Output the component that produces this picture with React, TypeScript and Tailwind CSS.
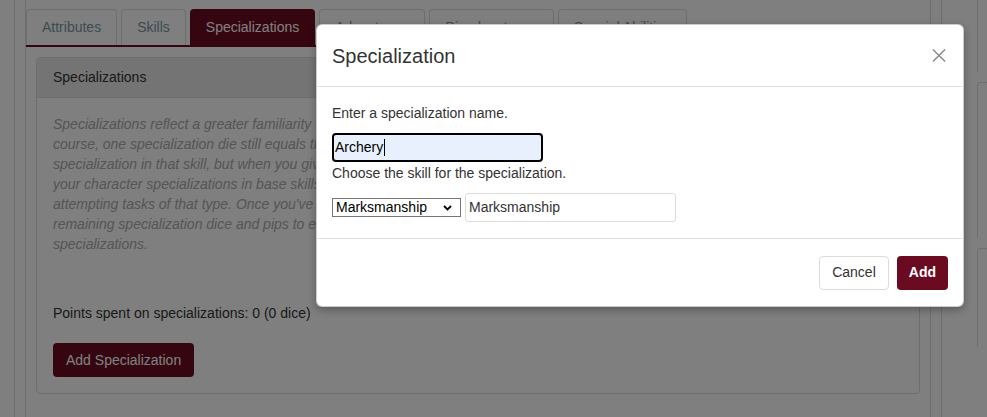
import React from "react";

const TABS = ["Attributes", "Skills", "Specializations", "Advantages", "Disadvantages", "Special Abilities"];

// description text, broken at the same places as the original page
const DESCRIPTION = [
  "Specializations reflect a greater familiarity with a particular item or action covered by the base skill. Specializations cost less than base skills to purchase. Of",
  "course, one specialization die still equals three specialization pips. You can improve the base skill without affecting the specialization, or have a",
  "specialization in that skill, but when you give your character a specialization, it only applies to rolls related to that specific area of expertise. Giving",
  "your character specializations in base skills he already has adds the specialization dice to the base skill's value when the character is",
  "attempting tasks of that type. Once you've spent all of the dice you want on base skills, you may use any",
  "remaining specialization dice and pips to enhance your character's abilities with narrow, focused",
  "specializations.",
];

export default function App() {
  return (
    <div className="relative h-[417px] w-[987px] overflow-hidden bg-white font-['Liberation_Sans',Arial,sans-serif] text-[14px] text-[#333]">
      {/* Page underneath the dialog */}
      <div className="flex h-full">
        <div className="ml-[14px] h-full w-[928px] shrink-0 border-x border-[#dddddd] px-[10px]">
          <div className="flex h-full flex-col border-x border-[#dddddd] pt-[9px]">
            {/* Tab row */}
            <div className="flex gap-[4px] border-b-2 border-[#6b0b21]">
              {TABS.map((tab) => (
                <div
                  key={tab}
                  className={
                    tab === "Specializations"
                      ? "flex h-[36px] items-center rounded-t-[4px] border border-b-0 border-[#6b0b21] bg-[#6b0b21] px-[15px] text-white"
                      : "flex h-[36px] items-center rounded-t-[4px] border border-b-0 border-[#dddddd] px-[15px] text-[#78989f]"
                  }
                >
                  {tab}
                </div>
              ))}
            </div>

            {/* Tab content */}
            <div className="px-[10px] pt-[10px]">
              <div className="flex flex-col rounded-[4px] border border-[#dddddd]">
                <div className="flex h-[40px] items-center rounded-t-[4px] border-b border-[#dddddd] bg-[#e8e8e8] px-4 text-[#333]">
                  Specializations
                </div>
                <div className="flex flex-col items-start p-4">
                  <p className="w-full overflow-hidden italic leading-[20px] text-[#aaaaaa]">
                    {DESCRIPTION.map((line, i) => (
                      <span key={i} className="block whitespace-nowrap">
                        {line}
                      </span>
                    ))}
                  </p>
                  <div className="mt-[49px] leading-[20px] text-[#333]">Points spent on specializations: 0 (0 dice)</div>
                  <button
                    type="button"
                    className="mt-[20px] flex h-[34px] items-center rounded-[4px] bg-[#6b0b21] px-[13px] text-white"
                  >
                    Add Specialization
                  </button>
                </div>
              </div>
            </div>
          </div>
        </div>

        {/* Right column cards */}
        <div className="ml-[35px] flex w-[120px] shrink-0 flex-col">
          <div className="h-[72px] border-l border-[#dddddd]" />
          <div className="mt-[10px] h-[155px] rounded-tl-[4px] border-l border-t border-[#dddddd]" />
          <div className="mt-[11px] h-[99px] rounded-tl-[4px] border-l border-t border-[#dddddd]" />
        </div>
      </div>

      {/* Backdrop */}
      <div className="absolute inset-0 bg-black/50" />

      {/* Dialog */}
      <div className="absolute left-[316px] top-[24px] flex w-[648px] flex-col rounded-[6px] border border-black/20 bg-white shadow-[0_3px_9px_rgba(0,0,0,0.3)]">
        <div className="flex h-[62px] items-center justify-between border-b border-[#dee2e6] px-[15px]">
          <h2 className="text-[20px] leading-[30px] text-[#333]">Specialization</h2>
          <button type="button" className="mr-[2px] flex h-[14px] w-[14px] items-center justify-center text-[#8a8a8a]">
            <svg width="15" height="15" viewBox="0 0 15 15" fill="none" stroke="currentColor" strokeWidth="1.6">
              <path d="M1 1L14 14M14 1L1 14" />
            </svg>
          </button>
        </div>

        <div className="flex flex-col items-start border-b border-[#dee2e6] px-[15px] pb-4 pt-4">
          <div className="leading-[20px]">Enter a specialization name.</div>
          <div className="mt-[10px] flex h-[29px] w-[211px] items-center rounded-[4px] border-2 border-black bg-[#e8f0fe] pl-[1px] text-black">
            <span>Archery</span>
            <span className="ml-[1px] h-[17px] w-px bg-black" />
          </div>
          <div className="mt-[1px] leading-[20px]">Choose the skill for the specialization.</div>
          <div className="mt-[10px] flex items-center gap-[4px]">
            <div className="flex h-[19px] w-[129px] items-center justify-between border border-[#767676] pl-[3px] pr-[8px] text-black">
              <span>Marksmanship</span>
              <svg width="9" height="6" viewBox="0 0 9 6" fill="none" stroke="black" strokeWidth="1.8">
                <path d="M1 1L4.5 4.5L8 1" />
              </svg>
            </div>
            <div className="flex h-[29px] w-[211px] items-center rounded-[3px] border border-[#dddddd] px-[3px] text-[#333]">
              Marksmanship
            </div>
          </div>
        </div>

        <div className="flex h-[67px] items-center justify-end gap-[8px] px-[15px]">
          <button type="button" className="flex h-[34px] items-center rounded-[4px] border border-[#dddddd] bg-white px-3 text-[#333]">
            Cancel
          </button>
          <button type="button" className="flex h-[34px] items-center rounded-[4px] bg-[#6b0b21] px-3 font-bold text-white">
            Add
          </button>
        </div>
      </div>
    </div>
  );
}
